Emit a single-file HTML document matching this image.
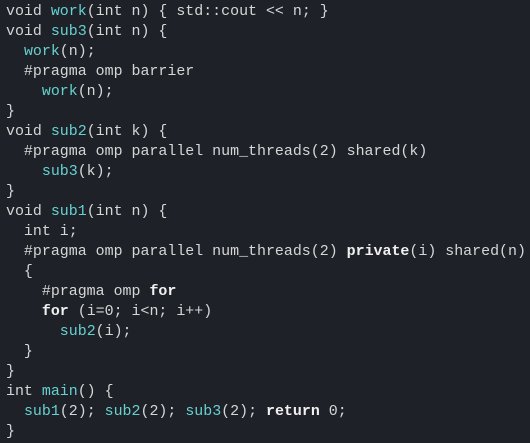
<!DOCTYPE html><html><head><style>
html,body{margin:0;background:#1e2127;width:530px;height:443px;overflow:hidden}
pre{margin:0;padding:2px 0 0 6px;font-family:"Liberation Mono","DejaVu Sans Mono",monospace;font-size:14.95px;line-height:20px;color:#d6d6d6}
.f{color:#66d1d1}.b{font-weight:bold;color:#f0f0f0}
</style></head><body><pre>void <span class="f">work</span>(int n) { std::cout &lt;&lt; n; }
void <span class="f">sub3</span>(int n) {
  <span class="f">work</span>(n);
  #pragma omp barrier
    <span class="f">work</span>(n);
}
void <span class="f">sub2</span>(int k) {
  #pragma omp parallel num_threads(2) shared(k)
    <span class="f">sub3</span>(k);
}
void <span class="f">sub1</span>(int n) {
  int i;
  #pragma omp parallel num_threads(2) <span class="b">private</span>(i) shared(n)
  {
    #pragma omp <span class="b">for</span>
    <span class="b">for</span> (i=0; i&lt;n; i++)
      <span class="f">sub2</span>(i);
  }
}
int <span class="f">main</span>() {
  <span class="f">sub1</span>(2); <span class="f">sub2</span>(2); <span class="f">sub3</span>(2); <span class="b">return</span> 0;
}</pre></body></html>
